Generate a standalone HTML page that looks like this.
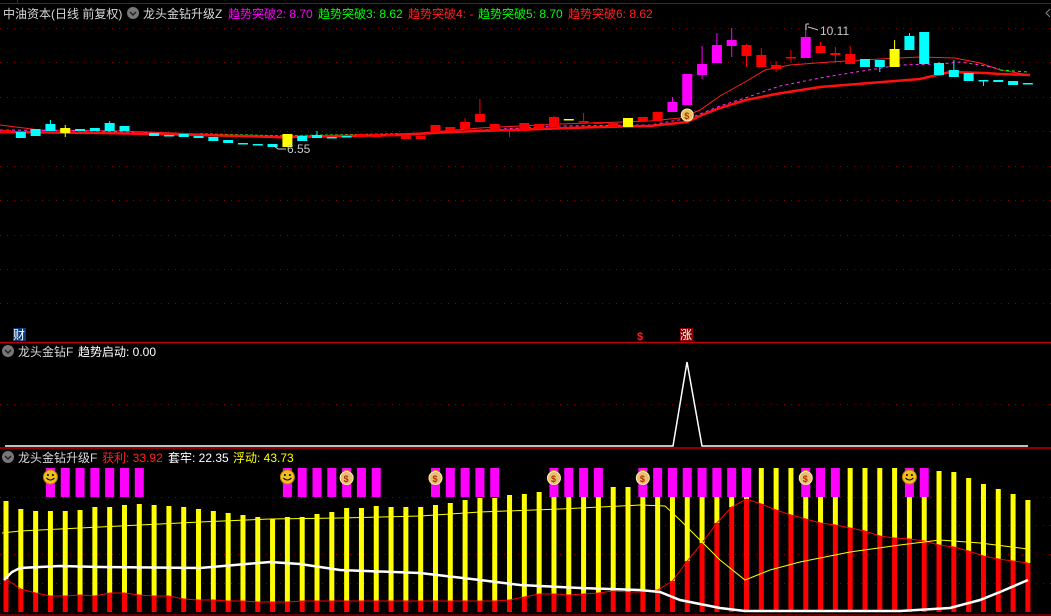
<!DOCTYPE html>
<html><head><meta charset="utf-8">
<style>
html,body{margin:0;padding:0;background:#000;width:1051px;height:616px;overflow:hidden}
svg{display:block}
text{font-family:"Liberation Sans","Noto Sans CJK SC",sans-serif;font-size:12px}
</style></head>
<body>
<svg id="s" width="1051" height="616" xmlns="http://www.w3.org/2000/svg">
<rect width="1051" height="616" fill="#000"/>
<g id="grid"></g>
<line x1="0" y1="3.5" x2="1051" y2="3.5" stroke="#a00000"/>
<line x1="17.5" y1="0" x2="17.5" y2="3" stroke="#a00000"/>
<line x1="0" y1="342.5" x2="1051" y2="342.5" stroke="#c00000" stroke-width="1.5"/>
<line x1="0" y1="448" x2="1051" y2="448" stroke="#c00000" stroke-width="1.5"/>
<line x1="0" y1="615" x2="1051" y2="615" stroke="#c00000"/>
<g id="top"></g>
<g id="bot"></g>
<!-- middle panel -->
<polyline points="5,446 673,446 687,362 702,446 1028,446" fill="none" stroke="#fff" stroke-width="1.5"/>
<!-- headers -->
<text x="3" y="18" fill="#d8d8d8">中油资本(日线 前复权)</text>
<circle cx="133" cy="13" r="6" fill="#777"/><path d="M130 12 l3 3 l3 -3" stroke="#222" fill="none" stroke-width="1.5"/>
<text x="143" y="18" fill="#d8d8d8">龙头金钻升级Z</text>
<text x="228" y="18" fill="#ff00ff">趋势突破2: 8.70</text>
<text x="318" y="18" fill="#00ff00">趋势突破3: 8.62</text>
<text x="408" y="18" fill="#ff2020">趋势突破4: -</text>
<text x="478" y="18" fill="#00ff00">趋势突破5: 8.70</text>
<text x="568" y="18" fill="#ff2020">趋势突破6: 8.62</text>
<path d="M1050 9 l-4 4 l4 4" stroke="#888" fill="none"/>
<text x="820" y="35" fill="#c8c8c8">10.11</text>
<path d="M806 24 v6 M806 24 h3 M808 27 q4 1 10 3" stroke="#ccc" fill="none"/>
<text x="287" y="153" fill="#c8c8c8">6.55</text>
<path d="M274 146 l4 3 h8" stroke="#ccc" fill="none"/>
<rect x="13" y="328" width="13" height="13" fill="#0a3a7a"/><text x="13" y="339" fill="#fff" style="font-size:12px">财</text>
<text x="637" y="340" fill="#ff2020" style="font-size:11px;font-weight:bold">$</text>
<rect x="680" y="328" width="13" height="13" fill="#8a0000"/><text x="680" y="339" fill="#fff" style="font-size:12px">涨</text>
<circle cx="8" cy="351" r="6" fill="#777"/><path d="M5 350 l3 3 l3 -3" stroke="#222" fill="none" stroke-width="1.5"/>
<text x="18" y="356" fill="#d8d8d8">龙头金钻F</text>
<text x="78" y="356" fill="#fff">趋势启动: 0.00</text>
<circle cx="8" cy="457" r="6" fill="#777"/><path d="M5 456 l3 3 l3 -3" stroke="#222" fill="none" stroke-width="1.5"/>
<text x="18" y="462" fill="#d8d8d8">龙头金钻升级F</text>
<text x="102" y="462" fill="#ff2020">获利: 33.92</text>
<text x="168" y="462" fill="#fff">套牢: 22.35</text>
<text x="233" y="462" fill="#ffff00">浮动: 43.73</text>
</svg>
<script>
var NS="http://www.w3.org/2000/svg";
function el(g,t,a){var e=document.createElementNS(NS,t);for(var k in a)e.setAttribute(k,a[k]);document.getElementById(g).appendChild(e);return e;}
function X(i){return 6+14.81*i;}
// grid
[28,62,97,131,166,200,235,269,303,404,497,525,554,583].forEach(function(y){
 el('grid','line',{x1:0,x2:1051,y1:y+.5,y2:y+.5,stroke:'#8a0000','stroke-dasharray':'1 6'});
});
// MAs top
function pl(g,pts,c,w,d){var a={points:pts.map(function(p){return p.join(',')}).join(' '),fill:'none',stroke:c,'stroke-width':w};if(d)a['stroke-dasharray']=d;el(g,'polyline',a);}
pl('top',[[0,125],[40,130],[120,131],[200,134],[280,138],[350,136],[420,133],[480,128],[560,124],[650,121],[680,118],[700,110],[720,96],[745,82],[765,70],[790,65],[830,62],[880,59],[920,57],[955,58],[980,63],[1000,70],[1030,75]],'#ff2020',1);
pl('top',[[0,130],[100,131],[200,135],[280,137],[400,135],[480,130],[560,126],[650,125],[690,118],[720,106],[745,98],[780,86],[820,78],[850,73],[900,65],[940,64],[960,62],[980,65],[1000,69]],'#ff30ff',1,'3 3');
pl('top',[[200,134],[280,136],[400,134]],'#00ff00',1.5,'3 2');
pl('top',[[1000,70],[1028,72]],'#00ff00',1,'3 3');
pl('top',[[0,132],[100,133],[200,135],[280,137],[400,135],[450,132],[540,129],[600,127],[650,126],[687,122],[702,115],[720,108],[746,100],[776,94],[820,87],[870,83],[920,79],[950,72],[985,73],[1000,74],[1030,75]],'#ff1010',2.5);
// candles: [i, top, bottom, color, wickTop, wickBot]
var C='#00ffff',R='#ff0000',M='#ff00ff',Y='#ffff00';
var cd=[[0,130,133,R],[1,132,138,C],[2,129,136,C],[3,124,131,C,120],[4,128,133,Y,125,137],[5,129,131,C],[6,128,131,C],[7,123,131,C,121],[8,126,131,C],[9,131,133,R],[10,133,136,C],[11,135,136,C],[12,134,137,C],[13,136,138,C],[14,137,141,C],[15,140,143,C],[16,143,144,C],[17,144,145,C],[18,144,147,C],[19,134,147,Y],[20,136,141,C],[21,135,138,C,131],[22,137,138,C],[23,136,137,C],[24,134,137,R],[25,134,137,R],[26,134,136,R],[27,135,139,R],[28,136,139,R],[29,125,133,R,125],[30,127,131,R],[31,122,129,R,118],[32,114,122,R,99],[33,124,131,R],[34,130,131,R,130,137],[35,123,131,R],[36,124,129,R],[37,117,127,R,116],[38,119,120,Y],[39,121,122,R,113],[40,122,124,R],[41,123,127,R],[42,118,127,Y],[43,117,121,R],[44,112,121,R],[45,102,112,M,97],[46,74,105,M],[47,64,75,M,46,79],[48,45,63,M,33],[49,40,46,M,28,57],[50,45,56,R,44,67],[51,55,67,R,48],[52,65,69,R,61,72],[53,57,58,R,50,62],[54,37,58,M,25],[55,46,53,R,42],[56,53,55,R,47,63],[57,54,64,R,46],[58,59,67,C],[59,60,67,C,60,72],[60,49,67,Y,40],[61,36,50,C,33],[62,32,64,C],[63,63,75,C,62],[64,70,77,C,60],[65,73,81,C],[66,80,81,C,80,86],[67,80,82,C],[68,81,85,C],[69,83,84,C]];
cd.forEach(function(c){var x=X(c[0]);var wt=c[4]||c[1],wb=c[5]||c[2];
 if(wt<c[1]||wb>c[2])el('top','line',{x1:x,x2:x,y1:wt,y2:wb,stroke:c[3]});
 el('top','rect',{x:x-5,y:c[1],width:10,height:Math.max(1.5,c[2]-c[1]),fill:c[3]});});
// moneybag on 46
function bag(x,y){el('top','circle',{cx:x,cy:y,r:6,fill:'#e8c060',stroke:'#fff2b0'});var t=el('top','text',{x:x-3,y:y+4,fill:'#a04000',style:'font-size:9px;font-weight:bold'});t.textContent='$';}
bag(X(46),115);
// bottom panel
var yt=[501,509,511,511,511,510,507,507,505,504,505,506,507,509,511,513,515,517,519,517,517,514,512,508,508,506,507,507,507,505,503,500,498,498,495,494,492,490,488,487,487,487,487,482,478,475,472,470,468,468,468,468,468,468,468,468,468,468,468,468,468,469,470,471,472,478,484,489,494,500];
var rt=[579,589,593,596,596,595,596,593,593,595,596,596,599,600,600,601,601,602,602,602,601,601,601,601,601,601,601,601,601,601,601,601,601,601,600,597,594,594,595,594,593,591,592,592,590,581,561,543,523,507,499,504,510,515,519,523,525,528,531,536,538,539,541,545,547,551,556,559,561,563];
for(var i=0;i<70;i++){var x=X(i);
 el('bot','rect',{x:x-2.5,y:yt[i],width:5,height:rt[i]-yt[i],fill:'#ffff00'});
 el('bot','rect',{x:x-2.5,y:rt[i],width:5,height:612-rt[i],fill:'#ff0000'});}
var rp=[];for(i=0;i<70;i++)rp.push([X(i),rt[i]]);
pl('bot',rp,'#ff0000',1);
pl('bot',[[2,533],[20,531],[100,527],[200,522],[270,519],[340,518],[420,516],[480,512],[560,509],[640,505],[665,506],[680,520],[700,540],[720,560],[745,580],[770,570],[800,562],[850,552],[900,545],[940,540],[980,543],[1028,549]],'#ffff00',1);
pl('bot',[[4,580],[12,572],[20,568],[60,566],[100,567],[200,568],[270,562],[300,564],[340,570],[420,573],[480,580],[520,585],[580,588],[640,590],[660,592],[680,600],[700,604],[720,608],[745,611],[800,611],[900,611],[950,608],[980,600],[1000,592],[1028,580]],'#ffffff',2.5);
var mg=[3,4,5,6,7,8,9,19,20,21,22,23,24,25,29,30,31,32,33,37,38,39,40,43,44,45,46,47,48,49,50,54,55,56,61,62];
mg.forEach(function(i){el('bot','rect',{x:X(i)-4.5,y:468,width:9,height:29,fill:'#ff00ff'});});
function smile(x,y){el('bot','circle',{cx:x,cy:y,r:7,fill:'#f0c020',stroke:'#c08000'});el('bot','circle',{cx:x-2.5,cy:y-2,r:1,fill:'#000'});el('bot','circle',{cx:x+2.5,cy:y-2,r:1,fill:'#000'});el('bot','path',{d:'M'+(x-4)+' '+(y+1)+' q4 4 8 0',stroke:'#000',fill:'none'});}
function bag2(x,y){el('bot','path',{d:'M'+(x-3)+' '+(y-7)+' l3 2 l3 -2 z',fill:'#d09030'});el('bot','circle',{cx:x,cy:y+1,r:6.5,fill:'#e8c070',stroke:'#fff0b0'});var t=el('bot','text',{x:x-3,y:y+5,fill:'#b03000',style:'font-size:9px;font-weight:bold'});t.textContent='$';}
[3,19,61].forEach(function(i){smile(X(i),477);});
[23,29,37,43,54].forEach(function(i){bag2(X(i),477);});
</script>
</body></html>
